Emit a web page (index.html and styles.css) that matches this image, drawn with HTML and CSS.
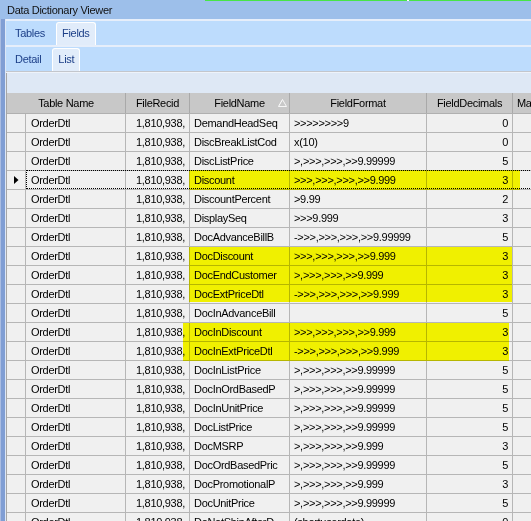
FILE: index.html
```html
<!DOCTYPE html>
<html lang="en">
<head>
<meta charset="UTF-8">
<title>Data Dictionary Viewer</title>
<link rel="stylesheet" href="styles.css">
</head>
<body>
<div class="window">
  <div class="titlebar">Data Dictionary Viewer</div>
  <div class="frame">
    <div class="leftbar"></div>
    <div class="main">
      <div class="sep"></div>
      <div class="tabs">
        <div class="tab">Tables</div>
        <div class="tab on">Fields</div>
      </div>
      <div class="sep"></div>
      <div class="tabs">
        <div class="tab">Detail</div>
        <div class="tab on">List</div>
      </div>
      <div class="rule"></div>
      <div class="toolbar"></div>

      <div class="grid">
        <div class="head">
          <div class="c first">Table Name</div>
          <div class="c fr">FileRecid</div>
          <div class="c fn">FieldName
            <svg class="sort" width="9" height="8" viewBox="0 0 9 8">
              <polyline points="0.5,7.5 4.5,0.5" fill="none" stroke="#ffffff"/>
              <polyline points="4.5,0.5 8.5,7.5 0.5,7.5" fill="none" stroke="#f6f6f6"/>
            </svg>
          </div>
          <div class="c ff">FieldFormat</div>
          <div class="c fd">FieldDecimals</div>
          <div class="c mx">Ma</div>
        </div>

        <div class="row"><div class="c rh"></div><div class="c tn">OrderDtl</div><div class="c fr">1,810,938,</div><div class="c fn">DemandHeadSeq</div><div class="c ff">&gt;&gt;&gt;&gt;&gt;&gt;&gt;&gt;9</div><div class="c fd">0</div><div class="c mx"></div></div>
        <div class="row"><div class="c rh"></div><div class="c tn">OrderDtl</div><div class="c fr">1,810,938,</div><div class="c fn">DiscBreakListCod</div><div class="c ff">x(10)</div><div class="c fd">0</div><div class="c mx"></div></div>
        <div class="row"><div class="c rh"></div><div class="c tn">OrderDtl</div><div class="c fr">1,810,938,</div><div class="c fn">DiscListPrice</div><div class="c ff">&gt;,&gt;&gt;&gt;,&gt;&gt;&gt;,&gt;&gt;9.99999</div><div class="c fd">5</div><div class="c mx"></div></div>
        <div class="row current"><div class="c rh"><svg width="5" height="8" viewBox="0 0 5 8"><polygon points="0,0 4.5,4 0,8" fill="#000"/></svg></div><div class="c tn">OrderDtl</div><div class="c fr">1,810,938,</div><div class="c fn">Discount</div><div class="c ff">&gt;&gt;&gt;,&gt;&gt;&gt;,&gt;&gt;&gt;,&gt;&gt;9.999</div><div class="c fd">3</div><div class="c mx"></div></div>
        <div class="row"><div class="c rh"></div><div class="c tn">OrderDtl</div><div class="c fr">1,810,938,</div><div class="c fn">DiscountPercent</div><div class="c ff">&gt;9.99</div><div class="c fd">2</div><div class="c mx"></div></div>
        <div class="row"><div class="c rh"></div><div class="c tn">OrderDtl</div><div class="c fr">1,810,938,</div><div class="c fn">DisplaySeq</div><div class="c ff">&gt;&gt;&gt;9.999</div><div class="c fd">3</div><div class="c mx"></div></div>
        <div class="row"><div class="c rh"></div><div class="c tn">OrderDtl</div><div class="c fr">1,810,938,</div><div class="c fn">DocAdvanceBillB</div><div class="c ff">-&gt;&gt;&gt;,&gt;&gt;&gt;,&gt;&gt;&gt;,&gt;&gt;9.99999</div><div class="c fd">5</div><div class="c mx"></div></div>
        <div class="row"><div class="c rh"></div><div class="c tn">OrderDtl</div><div class="c fr">1,810,938,</div><div class="c fn">DocDiscount</div><div class="c ff">&gt;&gt;&gt;,&gt;&gt;&gt;,&gt;&gt;&gt;,&gt;&gt;9.999</div><div class="c fd">3</div><div class="c mx"></div></div>
        <div class="row"><div class="c rh"></div><div class="c tn">OrderDtl</div><div class="c fr">1,810,938,</div><div class="c fn">DocEndCustomer</div><div class="c ff">&gt;,&gt;&gt;&gt;,&gt;&gt;&gt;,&gt;&gt;9.999</div><div class="c fd">3</div><div class="c mx"></div></div>
        <div class="row"><div class="c rh"></div><div class="c tn">OrderDtl</div><div class="c fr">1,810,938,</div><div class="c fn">DocExtPriceDtl</div><div class="c ff">-&gt;&gt;&gt;,&gt;&gt;&gt;,&gt;&gt;&gt;,&gt;&gt;9.999</div><div class="c fd">3</div><div class="c mx"></div></div>
        <div class="row"><div class="c rh"></div><div class="c tn">OrderDtl</div><div class="c fr">1,810,938,</div><div class="c fn">DocInAdvanceBill</div><div class="c ff"></div><div class="c fd">5</div><div class="c mx"></div></div>
        <div class="row"><div class="c rh"></div><div class="c tn">OrderDtl</div><div class="c fr">1,810,938,</div><div class="c fn">DocInDiscount</div><div class="c ff">&gt;&gt;&gt;,&gt;&gt;&gt;,&gt;&gt;&gt;,&gt;&gt;9.999</div><div class="c fd">3</div><div class="c mx"></div></div>
        <div class="row"><div class="c rh"></div><div class="c tn">OrderDtl</div><div class="c fr">1,810,938,</div><div class="c fn">DocInExtPriceDtl</div><div class="c ff">-&gt;&gt;&gt;,&gt;&gt;&gt;,&gt;&gt;&gt;,&gt;&gt;9.999</div><div class="c fd">3</div><div class="c mx"></div></div>
        <div class="row"><div class="c rh"></div><div class="c tn">OrderDtl</div><div class="c fr">1,810,938,</div><div class="c fn">DocInListPrice</div><div class="c ff">&gt;,&gt;&gt;&gt;,&gt;&gt;&gt;,&gt;&gt;9.99999</div><div class="c fd">5</div><div class="c mx"></div></div>
        <div class="row"><div class="c rh"></div><div class="c tn">OrderDtl</div><div class="c fr">1,810,938,</div><div class="c fn">DocInOrdBasedP</div><div class="c ff">&gt;,&gt;&gt;&gt;,&gt;&gt;&gt;,&gt;&gt;9.99999</div><div class="c fd">5</div><div class="c mx"></div></div>
        <div class="row"><div class="c rh"></div><div class="c tn">OrderDtl</div><div class="c fr">1,810,938,</div><div class="c fn">DocInUnitPrice</div><div class="c ff">&gt;,&gt;&gt;&gt;,&gt;&gt;&gt;,&gt;&gt;9.99999</div><div class="c fd">5</div><div class="c mx"></div></div>
        <div class="row"><div class="c rh"></div><div class="c tn">OrderDtl</div><div class="c fr">1,810,938,</div><div class="c fn">DocListPrice</div><div class="c ff">&gt;,&gt;&gt;&gt;,&gt;&gt;&gt;,&gt;&gt;9.99999</div><div class="c fd">5</div><div class="c mx"></div></div>
        <div class="row"><div class="c rh"></div><div class="c tn">OrderDtl</div><div class="c fr">1,810,938,</div><div class="c fn">DocMSRP</div><div class="c ff">&gt;,&gt;&gt;&gt;,&gt;&gt;&gt;,&gt;&gt;9.999</div><div class="c fd">3</div><div class="c mx"></div></div>
        <div class="row"><div class="c rh"></div><div class="c tn">OrderDtl</div><div class="c fr">1,810,938,</div><div class="c fn">DocOrdBasedPric</div><div class="c ff">&gt;,&gt;&gt;&gt;,&gt;&gt;&gt;,&gt;&gt;9.99999</div><div class="c fd">5</div><div class="c mx"></div></div>
        <div class="row"><div class="c rh"></div><div class="c tn">OrderDtl</div><div class="c fr">1,810,938,</div><div class="c fn">DocPromotionalP</div><div class="c ff">&gt;,&gt;&gt;&gt;,&gt;&gt;&gt;,&gt;&gt;9.999</div><div class="c fd">3</div><div class="c mx"></div></div>
        <div class="row"><div class="c rh"></div><div class="c tn">OrderDtl</div><div class="c fr">1,810,938,</div><div class="c fn">DocUnitPrice</div><div class="c ff">&gt;,&gt;&gt;&gt;,&gt;&gt;&gt;,&gt;&gt;9.99999</div><div class="c fd">5</div><div class="c mx"></div></div>
        <div class="row"><div class="c rh"></div><div class="c tn">OrderDtl</div><div class="c fr">1,810,938,</div><div class="c fn">DoNotShipAfterD</div><div class="c ff">(shortuserdate)</div><div class="c fd">0</div><div class="c mx"></div></div>

        <!-- focus box of the current row, then the marker highlights on top -->
        <div class="focus"></div>
        <div class="mark mark-a"></div>
        <div class="mark mark-b"></div>
        <div class="mark mark-c"></div>
      </div>
    </div>
  </div>
</div>
</body>
</html>
```

FILE: styles.css
```css
body {
    margin: 0;
    font-family: "Liberation Sans", Arial, sans-serif;
    font-size: 11px;
    letter-spacing: -0.3px;
    color: #000;
    background: #f0f0f0;
}

.window {
    width: 531px;
    height: 521px;
    overflow: hidden;
}

.titlebar {
    height: 19px;
    line-height: 20px;
    padding-left: 7px;
    color: #111;
    background-color: #9dbfea;
    /* green edge along the top */
    background-image: linear-gradient(to right, #9dbfea 205px, #47e547 205px, #47e547 407px, #fff 407px, #fff 409px, #47e547 409px);
    background-size: 100% 1px;
    background-repeat: no-repeat;
}

.frame {
    display: flex;
    height: 502px;
}

.leftbar {
    width: 5px;
    background: #809ed4;
    box-shadow: inset 1px 0 #aabde2;
    border-right: 1px solid #dde7f6;
}

.main {
    flex: 1;
    min-width: 0;
    display: flex;
    flex-direction: column;
}

.sep {
    height: 2px;
    background: #e6eefa;
}

.tabs {
    height: 24px;
    display: flex;
    align-items: flex-end;
    padding-left: 4px;
    background: #bddcfd;
}

.tab {
    padding: 0 5px;
    line-height: 24px;
    color: #1c3f88;
}

.tab.on {
    height: 23px;
    line-height: 21px;
    margin-left: 6px;
    box-sizing: border-box;
    background: #e1ecfa;
    border: 1px solid #fff;
    border-bottom: 0;
    border-radius: 3px 3px 0 0;
}

.rule {
    height: 1px;
    background: #c3c6cc;
    border-bottom: 1px solid #eef3fa;
}

.toolbar {
    height: 20px;
    background: #dee8f5;
    border-left: 1px solid #a6a6a6;
}

.grid {
    position: relative;
    flex: 1;
    overflow: hidden;
    background: #f0f0f0;
    border-left: 1px solid #a6a6a6;
}

.head {
    display: flex;
    height: 21px;
    box-sizing: border-box;
    background: #c8c8c8;
    border-bottom: 1px solid #b0b0b0;
}

.head .c {
    position: relative;
    line-height: 20px;
    text-align: center;
    padding: 0;
    border-right: 1px solid #a9a9a9;
}

.head .first { width: 119px; }
.head .mx { text-align: left; padding-left: 4px; border-right: 0; }

.sort {
    position: absolute;
    right: 2px;
    top: 6px;
}

.row {
    display: flex;
    height: 19px;
    box-sizing: border-box;
    border-bottom: 1px solid #b6b6b6;
}

.c {
    flex: none;
    box-sizing: border-box;
    overflow: hidden;
    white-space: nowrap;
    line-height: 18px;
    border-right: 1px solid #b6b6b6;
}

.rh {
    width: 19px;
    display: flex;
    align-items: center;
    justify-content: center;
}

.tn { width: 100px; padding-left: 5px; }
.fr { width: 64px; padding-right: 4px; text-align: right; }
.fn { width: 100px; padding-left: 4px; }
.ff { width: 137px; padding-left: 4px; }
.fd { width: 86px; padding-right: 4px; text-align: right; }
.mx { flex: 1; border-right: 0; }

.focus {
    position: absolute;
    left: 19px;
    top: 77px;
    width: 600px;
    height: 19px;
    box-sizing: border-box;
    border: 1px dotted #000;
}

.mark {
    position: absolute;
    background: #ffff00;
    mix-blend-mode: multiply;
}

.mark-a { left: 182px; top: 77px; width: 331px; height: 20px; }
.mark-b { left: 182px; top: 154px; width: 323px; height: 55px; }
.mark-c { left: 176px; top: 230px; width: 326px; height: 38px; }
```
